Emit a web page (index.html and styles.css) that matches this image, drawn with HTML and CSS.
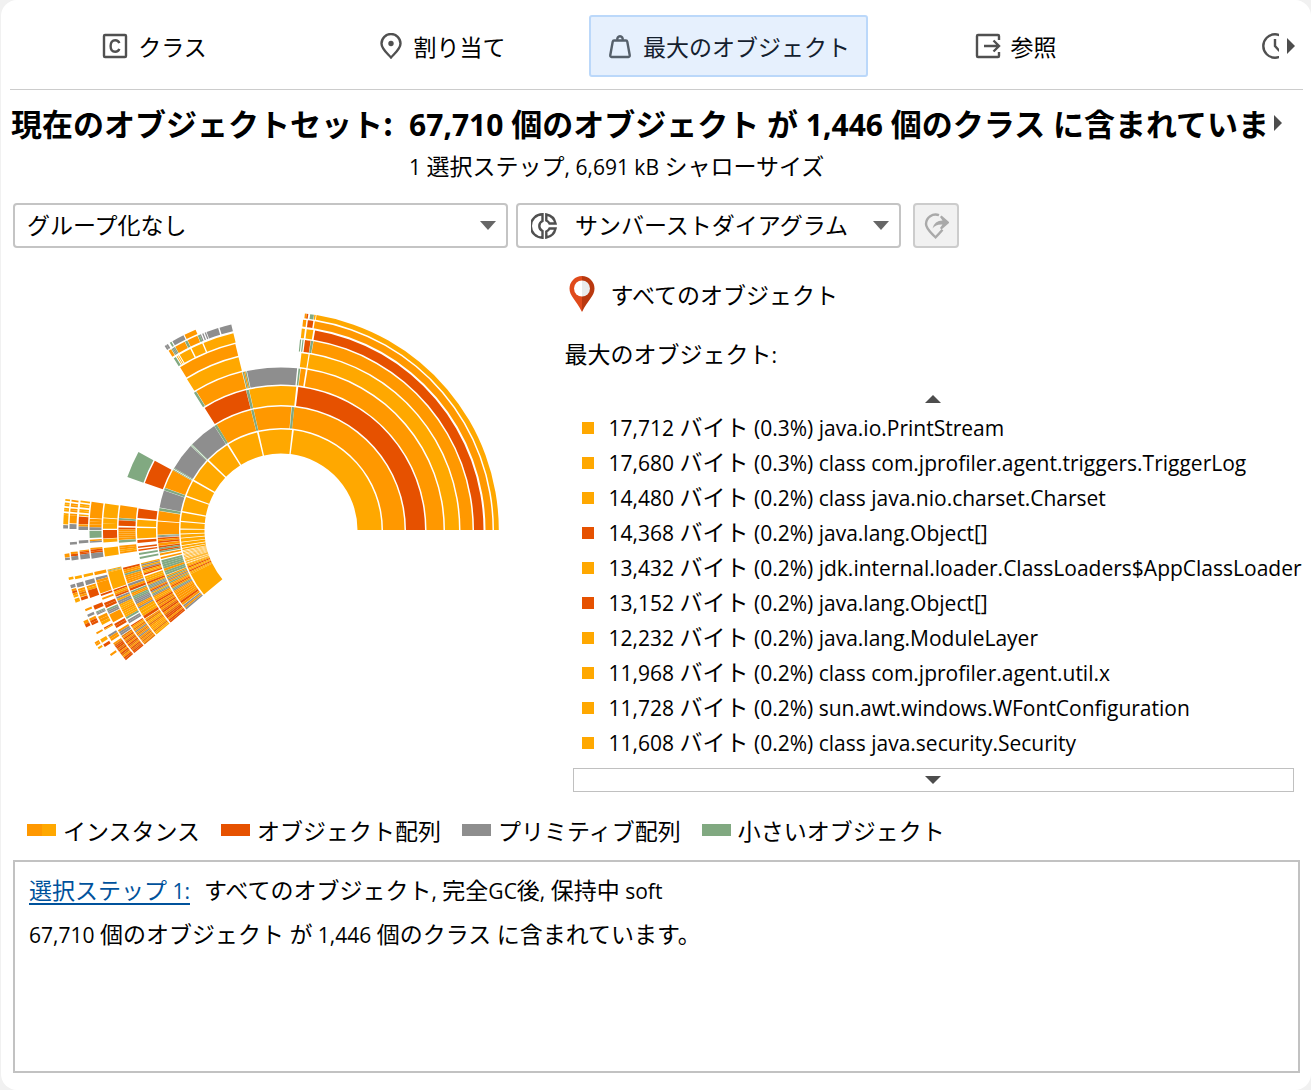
FILE: index.html
```html
<!DOCTYPE html>
<html lang="ja">
<head>
<meta charset="utf-8">
<meta name="viewport" content="width=device-width, initial-scale=1">
<title>最大のオブジェクト</title>
<link rel="stylesheet" href="styles.css">
</head>
<body>
<main class="panel">
  <nav class="tabs">
    <div class="tab-strip">
      <button class="tab" type="button">
        <svg class="icon" viewBox="0 0 26 26" aria-hidden="true"><rect x="2" y="2" width="22" height="22" rx="1" /><path d="M17.300 10.200C16.700 8.300 15.200 7.300 13.200 7.300C10.300 7.300 8.600 9.500 8.600 13S10.300 18.700 13.200 18.700C15.200 18.700 16.700 17.700 17.300 15.800" /></svg>
        クラス
      </button>
      <button class="tab" type="button">
        <svg class="icon" viewBox="0 0 26 26" aria-hidden="true"><path d="M13 24.500C9.500 20.500 3.500 16 3.500 10.500A9.500 9.500 0 0 1 22.500 10.500C22.500 16 16.500 20.500 13 24.500Z" /><circle class="solid" cx="13" cy="10.500" r="2.700" /></svg>
        割り当て
      </button>
      <button class="tab tab-active" type="button" aria-current="page">
        <svg class="icon" viewBox="0 0 26 26" aria-hidden="true"><path d="M7 7.500H19Q20 7.500 20.300 8.700L22.700 22Q23 24 21.500 24H4.500Q3 24 3.300 22L5.700 8.700Q6 7.500 7 7.500Z" /><path d="M10.500 7A2.700 2.700 0 1 1 15.500 7" /></svg>
        最大のオブジェクト
      </button>
      <button class="tab" type="button">
        <svg class="icon" viewBox="0 0 26 26" aria-hidden="true"><path d="M24 7V3Q24 2 23 2H3Q2 2 2 3V23Q2 24 3 24H23Q24 24 24 23V19M9 13H23.500M18.500 7.500L24 13L18.500 18.500" /></svg>
        参照
      </button>
      <button class="tab tab-cut" type="button" aria-label="時間">
        <svg class="icon" viewBox="0 0 26 26" aria-hidden="true"><circle cx="13" cy="13" r="11.700" /><path d="M13 6V13L17.500 18" /></svg>
      </button>
    </div>
    <button class="arrow-button" type="button" aria-label="次のタブ"><svg class="arrow-right" viewBox="0 0 8 16"><path d="M0 0L8 8L0 16Z" /></svg></button>
  </nav>

  <header class="summary">
    <h1 class="summary-title">現在のオブジェクトセット:</h1>
    <p class="summary-main"><span class="num">67,710 </span>個のオブジェクト<span class="num"> </span>が<span class="num"> 1,446 </span>個のクラス<span class="num"> </span>に含まれていま</p>
    <button class="arrow-button" type="button" aria-label="さらに表示"><svg class="arrow-right" viewBox="0 0 8 16"><path d="M0 0L8 8L0 16Z" /></svg></button>
    <p class="summary-sub"><span class="latin">1 </span>選択ステップ<span class="latin">, 6,691 kB </span>シャローサイズ</p>
  </header>

  <div class="controls">
    <div class="combo combo-group">
      <select aria-label="グループ化"><option>グループ化なし</option></select>
      <svg class="combo-arrow" viewBox="0 0 16 9" aria-hidden="true"><path d="M0 0H16L8 9Z" /></svg>
    </div>
    <div class="combo combo-view">
      <svg class="icon" viewBox="0 0 26 26" aria-hidden="true"><path d="M11.500 1.300V8Q8.300 9.500 8.300 13T11.500 18V24.700A11.700 11.700 0 0 1 11.500 1.300Z" /><path d="M15.300 1.500A11.500 11.500 0 0 1 24.500 10.500H18.500Q17.500 8.500 15.300 7.500ZM15.300 24.500A11.500 11.500 0 0 0 24.500 15.500H18.500Q17.500 17.500 15.300 18.500Z" /></svg>
      <select aria-label="表示"><option>サンバーストダイアグラム</option></select>
      <svg class="combo-arrow" viewBox="0 0 16 9" aria-hidden="true"><path d="M0 0H16L8 9Z" /></svg>
    </div>
    <button class="jump" type="button" disabled aria-label="選択に移動">
      <svg class="icon" viewBox="0 0 26 26" aria-hidden="true"><path d="M16 2.200A9.600 9.600 0 0 0 3 11C3 16 8.500 20 12.500 24.300Q16 21 19.500 16.800" /><path class="solid" d="M18.500 2.500L26.500 9.500L18.500 16.500L17 15L19.500 11.500Q13 11 9.500 15.500Q11.500 7.500 19.500 7.500L17 4Z" /></svg>
    </button>
  </div>

  <section class="content">
    <div class="chart"><svg id="sunburst" class="sunburst" viewBox="-219 -219 438 438" role="img" aria-label="サンバーストダイアグラム"></svg></div>
    <div class="details">
      <p class="scope">
        <svg class="pin" viewBox="0 0 26 36" aria-hidden="true"><path fill="#e04a1b" d="M13 0A12.500 12.500 0 0 0 .500 12.500C.500 20 7 24 13 36Z" /><path fill="#b9380f" d="M13 0A12.500 12.500 0 0 1 25.500 12.500C25.500 20 19 24 13 36Z" /><path fill="#fff" d="M13 4.500A8 8 0 0 0 13 20.500Z" /><path fill="#e9ebec" d="M13 4.500A8 8 0 0 1 13 20.500Z" /></svg>
        すべてのオブジェクト
      </p>
      <h2 class="list-title">最大のオブジェクト<span class="latin">:</span></h2>
      <div class="list">
        <button class="scroll-up" type="button" aria-label="上へ"><svg class="arrow-v" viewBox="0 0 16 8"><path d="M0 8H16L8 0Z" /></svg></button>
        <ul class="rows">
          <li class="row"><span class="dot"></span>17,712 <span class="ja">バイト</span> (0.3%) java.io.PrintStream</li>
          <li class="row"><span class="dot"></span>17,680 <span class="ja">バイト</span> (0.3%) class com.jprofiler.agent.triggers.TriggerLog</li>
          <li class="row"><span class="dot"></span>14,480 <span class="ja">バイト</span> (0.2%) class java.nio.charset.Charset</li>
          <li class="row"><span class="dot dot-array"></span>14,368 <span class="ja">バイト</span> (0.2%) java.lang.Object[]</li>
          <li class="row"><span class="dot"></span>13,432 <span class="ja">バイト</span> (0.2%) jdk.internal.loader.ClassLoaders$AppClassLoader</li>
          <li class="row"><span class="dot dot-array"></span>13,152 <span class="ja">バイト</span> (0.2%) java.lang.Object[]</li>
          <li class="row"><span class="dot"></span>12,232 <span class="ja">バイト</span> (0.2%) java.lang.ModuleLayer</li>
          <li class="row"><span class="dot"></span>11,968 <span class="ja">バイト</span> (0.2%) class com.jprofiler.agent.util.x</li>
          <li class="row"><span class="dot"></span>11,728 <span class="ja">バイト</span> (0.2%) sun.awt.windows.WFontConfiguration</li>
          <li class="row"><span class="dot"></span>11,608 <span class="ja">バイト</span> (0.2%) class java.security.Security</li>
        </ul>
        <button class="scroll-down" type="button" aria-label="下へ"><svg class="arrow-v" viewBox="0 0 16 8"><path d="M0 0H16L8 8Z" /></svg></button>
      </div>
    </div>
  </section>

  <ul class="legend">
    <li><span class="swatch swatch-instance"></span>インスタンス</li>
    <li><span class="swatch swatch-array"></span>オブジェクト配列</li>
    <li><span class="swatch swatch-primitive"></span>プリミティブ配列</li>
    <li><span class="swatch swatch-small"></span>小さいオブジェクト</li>
  </ul>

  <section class="steps">
    <p class="step"><a href="#step1">選択ステップ<span class="latin"> 1:</span></a><span>すべてのオブジェクト<span class="latin">, </span>完全<span class="latin">GC</span>後<span class="latin">, </span>保持中<span class="latin"> soft</span></span></p>
    <p class="step"><span><span class="latin">67,710 </span>個のオブジェクト<span class="latin"> </span>が<span class="latin"> 1,446 </span>個のクラス<span class="latin"> </span>に含まれています。</span></p>
  </section>
</main>
<script src="chart.js"></script>
</body>
</html>
```
FILE: styles.css
```css
* { box-sizing: border-box; }

body {
  margin: 0;
  background: #f1f1f1;
  color: #000;
  font-family: "Noto Sans CJK JP", "Open Sans", sans-serif;
  font-size: 23px;
  line-height: 34px;
}

h1, h2, p, ul { margin: 0; padding: 0; font-weight: 400; }
ul { list-style: none; }
button, select { font: inherit; color: inherit; }
button { border: 0; padding: 0; background: none; }
svg { display: block; flex: none; }

.latin { font-family: "Open Sans", sans-serif; font-size: 21px; line-height: 1; white-space: pre; }

.panel {
  min-height: 100vh;
  margin-left: 1px;
  padding: 0 11px 17px 12px;
  background: #fff;
  border-radius: 16px;
  display: flex;
  flex-direction: column;
}

.icon {
  width: 26px;
  height: 26px;
  fill: none;
  stroke: #505050;
  stroke-width: 2.4;
}
.icon .solid { fill: #505050; stroke: none; }

.tabs {
  display: flex;
  align-items: center;
  height: 90px;
  margin: 0 -3px;
  padding-top: 3px;
  border-bottom: 1px solid #ccc;
}
.tab-strip {
  flex: 1;
  min-width: 0;
  display: flex;
  gap: 8px;
  padding-left: 5px;
  overflow: hidden;
}
.tab {
  flex: 0 0 279px;
  height: 62px;
  display: flex;
  align-items: center;
  justify-content: center;
  gap: 10px;
  border: 2px solid transparent;
  border-radius: 3px;
}
.tab-active { background: #e6f0fd; border-color: #bbd8fa; color: #14202e; }
.tab-active .icon { stroke: #56606b; }
.tab-cut { justify-content: flex-start; padding-left: 97px; }
.arrow-button { flex: none; width: 24px; padding-left: 8px; }
.arrow-right { width: 8px; height: 16px; fill: #4d4d4d; }

.summary {
  display: grid;
  grid-template-columns: auto minmax(0, 1fr) auto;
  column-gap: 16px;
  align-items: center;
  margin: 12px 0 0 -2px;
}
.summary-title, .summary-main { font-size: 31px; line-height: 42px; font-weight: 700; white-space: nowrap; }
.summary-main .num { font-family: "Open Sans", sans-serif; font-size: 30px; line-height: 1; white-space: pre; }
.summary .arrow-button { margin: 0 10px 0 -20px; }
.summary-sub { grid-column: 2; line-height: 42px; }

.controls { display: flex; align-items: center; margin-top: 17px; gap: 8px; }
.combo {
  position: relative;
  display: flex;
  align-items: center;
  height: 45px;
  border: 2px solid #c4c4c4;
  border-radius: 4px;
}
.combo select {
  flex: 1;
  height: 100%;
  padding: 0 40px 4px 12px;
  border: 0;
  background: transparent;
  appearance: none;
}
.combo-group { width: 495px; }
.combo-view { width: 385px; padding-left: 13px; }
.combo-view select { padding-left: 18px; }
.combo-arrow { position: absolute; right: 10px; top: 16px; width: 16px; height: 9px; fill: #666; pointer-events: none; }
.jump {
  width: 46px;
  height: 45px;
  margin-left: 4px;
  display: grid;
  place-items: center;
  border: 2px solid #ccc;
  border-radius: 4px;
  background: #f1f1f1;
}
.jump .icon { stroke: #a9a9a9; }
.jump .icon .solid { fill: #a9a9a9; }

.content { display: grid; grid-template-columns: minmax(438px, 3fr) minmax(0, 4fr); }
.chart { display: flex; align-items: center; justify-content: center; }
.sunburst { width: 438px; height: 438px; margin-right: 16px; }

.details { padding: 25px 0 20px; }
.scope { display: flex; align-items: center; gap: 16px; padding-left: 4px; height: 42px; }
.pin { width: 26px; height: 36px; }
.list-title { margin-top: 20px; font-size: 23px; line-height: 36px; }
.list { margin: 20px 6px 0 8px; }
.scroll-up, .scroll-down { display: flex; align-items: center; justify-content: center; width: 100%; }
.scroll-up { height: 16px; margin-bottom: 4px; }
.scroll-down { height: 24px; margin-top: 7px; border: 1px solid #c0c0c0; }
.arrow-v { width: 16px; height: 8px; fill: #4d4d4d; }
.row {
  height: 35px;
  padding-left: 9px;
  font-family: "Open Sans", sans-serif;
  font-size: 21px;
  line-height: 35px;
  white-space: nowrap;
}
.row .ja { font-family: "Noto Sans CJK JP", sans-serif; font-size: 23px; line-height: 1; }
.dot { display: inline-block; width: 12px; height: 12px; margin-right: 15px; background: #ffa800; vertical-align: 2px; }
.dot-array { background: #e65100; }

.legend { display: flex; gap: 21px; padding-left: 14px; margin-top: 1px; }
.legend li { display: flex; align-items: center; gap: 7px; }
.swatch { width: 29px; height: 12px; }
.swatch-instance { background: linear-gradient(90deg, #ff9800 50%, #ffa800 50%); }
.swatch-array { background: #e65100; }
.swatch-primitive { background: #8e8e8e; }
.swatch-small { background: #81a981; }

.steps {
  flex: 1;
  margin-top: 13px;
  padding: 5px 14px;
  border: 2px solid #c2c2c2;
}
.step { display: flex; gap: 14px; line-height: 44px; }
.step a { color: #00529c; text-decoration-thickness: 2px; text-underline-offset: 4px; }
```
FILE: chart.js
```js
// Inner and outer radius of each ring, from the centre outwards.
const rings = [
  [76.5, 100.5], [102, 123.5], [125, 144], [145.5, 162.5], [164, 178],
  [179.5, 191.5], [193, 202.5], [204.5, 211.5], [213, 217.8]
];

// L, D: instance shades, r: object array, g: primitive array, n: small objects, ".": empty.
const colors = { L: "#ffa800", D: "#ff9800", r: "#e65100", g: "#8e8e8e", n: "#81a981", b: "#e8780a" };

// [start angle, end angle, stripes]; each range is divided evenly among its stripes.
const data = [
  [
    [0, 82.7, "L"], [83.7, 102.8, "L"], [103.8, 121.4, "L"], [122.4, 135.9, "L"], [136.9, 150, "L"],
    [151, 159.9, "L"], [160.8, 169.1, "L"], [170, 174.7, "L"], [175.5, 179.2, "L"], [179.9, 182, "L"],
    [182.6, 184.4, "L"], [184.9, 186.7, "L"], [187.2, 188.7, "L"], [189.2, 190.3, "L"], [190.8, 191.6, "L"],
    [192, 200, "L.L.L.L.L.L.LLL.LL.L"], [200, 206, "LLrLLrLL"], [206, 220, "L"]
  ],
  [
    [0, 83.8, "D"], [83.8, 85, "n"], [85.2, 102.8, "D"], [102.9, 104, "n"], [104.1, 121.4, "D"], [121.4, 122.6, "n"],
    [122.7, 136, "g"], [136, 137, "n.n"], [137.1, 149.8, "g"], [149.9, 151, "n.n"], [151.1, 160, "D"], [160.1, 161.2, "n"],
    [161.4, 169.5, "g"], [169.7, 171, "n"], [171.2, 175.6, "D"], [176.1, 182.2, "D"], [182.4, 183.4, "ng"], [183.6, 186, "rDr"],
    [186.2, 187.4, "D"], [187.6, 190.6, "rnrn"], [191, 193.6, "D.D"], [194.2, 201.4, "nnnnDnn"], [201.6, 211, "DnDgDnDDrDngDD"],
    [211, 217.4, "DDDDrD"], [217.6, 220, "gDg"]
  ],
  [
    [0, 83.1, "r"], [83.9, 102.8, "L"], [102.9, 104, "n"], [104.1, 122, "r"], [151.2, 161, "r"],
    [171.4, 175.2, "r"], [175.9, 178.6, "L"], [179.2, 183.4, "L"], [184, 185.2, "r"], [186.6, 188.4, "r.r"], [189.2, 191.6, "n.n"],
    [193.3, 198.2, "LgLgrLLr"], [198.8, 202, "LLLr"], [202, 207.4, "LgngDrgLng"], [207.4, 220, "DLDrDbDrDbrDbrrDrr"]
  ],
  [
    [0, 80.6, "D"], [81.2, 83, "D"], [83.2, 83.8, "n"], [84.3, 102.1, "g"], [102.3, 103.7, "nDn"], [103.9, 121.4, "D"], [121.5, 122.4, "n"],
    [151.3, 161, "n"], [171.2, 175.7, "D"], [175.8, 176.5, "n"], [176.6, 178.5, "r"], [179.1, 183.5, "rDDDDD"], [183.6, 184.5, "n"],
    [185.6, 188.4, "DDLD"], [193.4, 199.2, "rDDnDDDD"], [199.4, 202, "gDr"], [202.2, 209, "nDDnngggDDg"], [209, 213, "LLLr"], [213.2, 220, "DbLLbDLDLbLL"]
  ],
  [
    [0, 80.7, "L"], [81.1, 83.4, "L"], [103.8, 121.9, "L"], [171.4, 176, "L"], [176.2, 179.6, "LL"], [180, 182.7, "r"], [182.9, 184, "L"],
    [185.8, 188.6, "L"], [192.9, 193.8, "LnL"], [193.8, 199.4, "L"], [199.7, 202, "rLDr"], [202.2, 206, "gLggLL"], [206, 210, "LDLLLn"],
    [210.4, 212.2, "gg."], [212.4, 220, "rDLbDgDbDgDbDbDb"]
  ],
  [
    [0, 80.2, "D"], [80.3, 81, "n"], [81.1, 82.8, "r"], [83.2, 84.3, "n.n"], [103.8, 121.8, "D"],
    [171.5, 176.4, "D"], [176.6, 179.2, "DDD"], [179.2, 180, "g"], [180.2, 182.4, "n"], [182.9, 183.8, "Dg"], [185.4, 187, "Drr"], [187, 188.6, "g"],
    [192.7, 193.7, "D"], [194.4, 196, "gD"], [196, 199.4, "D"], [199.6, 202, "r.D."], [202.4, 204, "rr"], [204.4, 206, "ngg"],
    [206.2, 208.8, "D"], [209.4, 210.8, "rr"], [211.6, 213.4, "Dgg"], [213.6, 220, "bDrDbrDrbDrbrr"]
  ],
  [
    [0, 80.3, "r"], [80.8, 82.7, "L"], [83.2, 84.1, "L"], [103.6, 112.5, "L"], [112.9, 116.2, "L"], [116.6, 120, "L"], [120.3, 121, "L.L"], [121.3, 122, "n"],
    [171.6, 176, "L.LL.LL.L"], [176.2, 178.3, "r"], [178.4, 179, "D"], [179, 180, "g"], [183, 183.8, "g"], [185.8, 187, "Drr"], [187, 188.4, "g"],
    [192.7, 193.5, "L"], [194.5, 195.8, "g"], [196.1, 197.4, "DL"], [197.4, 199.6, "r"], [202, 203.2, "r"], [203.8, 204.8, "ngg"],
    [205.4, 208, "DDL"], [208.9, 209.6, "rL"], [211.3, 213.2, "gDD"], [214, 220, "DbrrbrDrbDrr"]
  ],
  [
    [0, 80.8, "D"], [81.2, 82.7, "r"], [83.1, 84, "D"], [103.6, 106.9, "g"], [107.3, 110.6, "g"], [110.8, 112.6, "g.g.g"], [112.6, 113.2, "n"],
    [113.3, 116.2, "D"], [116.3, 117, "n"], [117.1, 120, "D"], [120.1, 121.2, "ngn"], [121.3, 122.1, "D"],
    [171.8, 176, "D.DD.DD.D"], [176, 178.2, "D"], [178.4, 179.7, "g"], [183.3, 184, "g"], [186, 187.2, "Dr"], [187.2, 188.3, "g"],
    [192.7, 193.5, "L"], [194.6, 195.8, "g"], [196.2, 198.5, "DDbD"], [198.6, 199.5, "r"], [202, 202.6, "D"], [203.6, 204.3, "g"],
    [204.8, 206.8, "Drr"], [209, 209.5, "D"], [211.2, 212.2, "L"], [212.8, 213.6, "r"], [216, 216.6, "D"]
  ],
  [
    [0, 80.6, "L"], [80.8, 81.2, "L"], [81.3, 82.3, "n"], [82.8, 83.7, "rD"], [113.1, 116.3, "D"], [116.6, 119.9, "g"], [120.2, 120.7, "n"],
    [121.3, 122.3, "gg"], [171.8, 176, "L.LL.LL.L"], [176, 178.5, "L"], [178.7, 179.6, "g"], [186.3, 187.3, "D"], [187.4, 188, "g"],
    [192.6, 193.3, "L"], [194.6, 195.5, "g"], [195.8, 198.1, "DrDL"], [198.5, 199.5, "L"], [204.8, 206.6, "Dr"], [211.1, 213.2, "DD.L"]
  ]
];

const svg = document.getElementById("sunburst");

function point(radius, degrees) {
  const t = degrees * Math.PI / 180;
  return (radius * Math.cos(t)).toFixed(2) + " " + (-radius * Math.sin(t)).toFixed(2);
}

function addArc([inner, outer], from, to, color) {
  const path = document.createElementNS("http://www.w3.org/2000/svg", "path");
  path.setAttribute("d",
    `M${point(inner, from)}A${inner} ${inner} 0 0 0 ${point(inner, to)}` +
    `L${point(outer, to)}A${outer} ${outer} 0 0 1 ${point(outer, from)}Z`);
  path.setAttribute("fill", color);
  svg.appendChild(path);
}

data.forEach((segments, ring) => {
  for (const [from, to, stripes] of segments) {
    const step = (to - from) / stripes.length;
    [...stripes].forEach((key, i) => {
      if (key !== ".") addArc(rings[ring], from + i * step, from + (i + 1) * step, colors[key]);
    });
  }
});
```
